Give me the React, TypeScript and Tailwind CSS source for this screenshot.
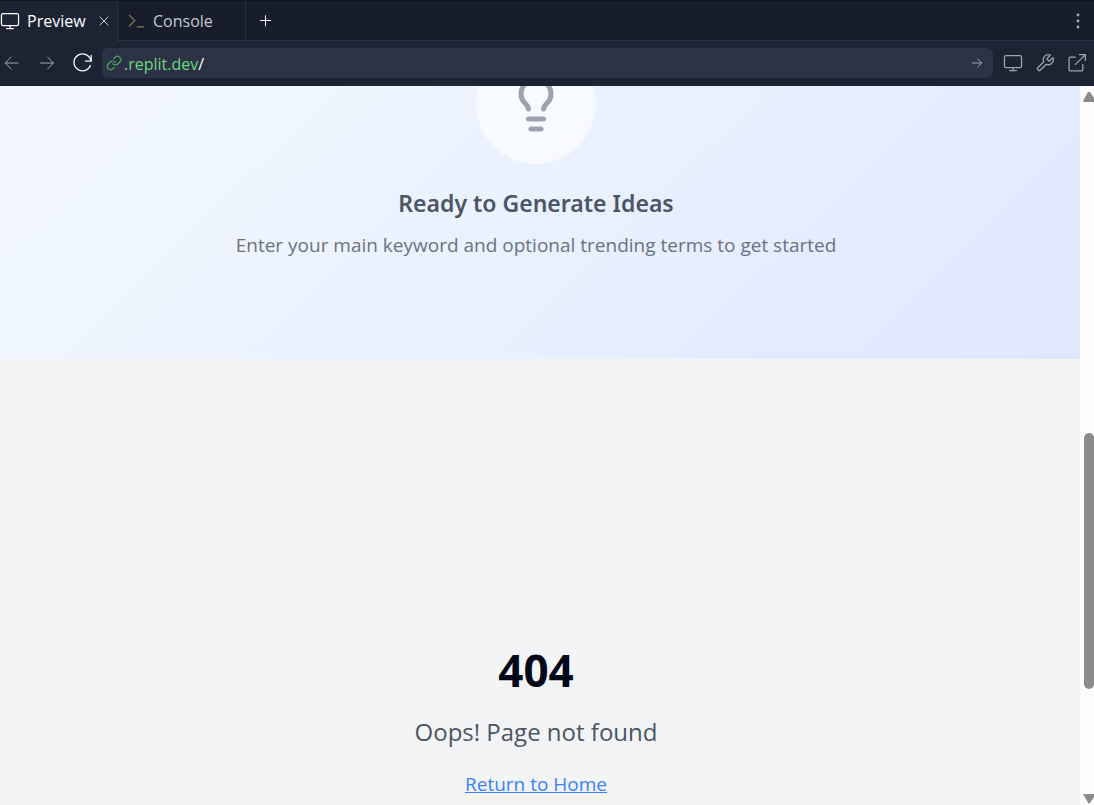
import React from "react";

type IconProps = { className?: string; children: React.ReactNode; stroke?: number };

function Icon({ className = "", children, stroke = 1.5 }: IconProps) {
  return (
    <svg viewBox="0 0 24 24" fill="none" stroke="currentColor" strokeWidth={stroke} strokeLinecap="round" strokeLinejoin="round" className={`block shrink-0 ${className}`} aria-hidden="true">
      {children}
    </svg>
  );
}

function Monitor({ className }: { className?: string }) {
  return (
    <Icon className={className}>
      <rect x="1.75" y="3" width="20.5" height="14.5" rx="2" />
      <path d="M12 17.5V21M8 21h8" />
    </Icon>
  );
}

function TabBar() {
  return (
    <div className="flex h-[41px] shrink-0 border-t border-[#0e1525] bg-[#171d2d]">
      <div className="flex w-[117px] items-center bg-[#1c2333] text-white">
        <button className="flex items-center gap-[7px]">
          <Monitor className="size-5" />
          Preview
        </button>
        <button aria-label="Close tab" className="ml-2.5 text-[#c2c8cc]">
          <Icon className="size-4"><path d="M6 6l12 12M18 6L6 18" /></Icon>
        </button>
      </div>
      <button className="flex w-[129px] items-center gap-[7px] border-x border-b border-[#2b3245] pl-2 text-[#c2c8cc]">
        <Icon className="size-5 text-[#8a7d4a]"><path d="M4 5l6.500 6.500L4 18M13.500 19h7.500" /></Icon>
        Console
      </button>
      <div className="flex flex-1 items-center justify-between border-b border-[#2b3245] pr-2 pl-3">
        <button aria-label="New tab" className="text-[#f5f9fc]">
          <Icon className="size-4"><path d="M11.250 4v15.500M3.500 11.250H19" /></Icon>
        </button>
        <button aria-label="More options" className="text-[#a9afb5]">
          <svg viewBox="0 0 16 16" fill="currentColor" className="block size-4" aria-hidden="true">
            <circle cx="8" cy="2" r="1.4" />
            <circle cx="8" cy="8" r="1.4" />
            <circle cx="8" cy="14" r="1.4" />
          </svg>
        </button>
      </div>
    </div>
  );
}

function AddressBar() {
  return (
    <div className="flex h-[45px] shrink-0 items-center bg-[#1c2333] pr-[7px] pb-0.5 text-[#a0a6ad]">
      <button aria-label="Back" className="ml-1">
        <Icon className="size-4"><path d="M21 12H2M10.500 3L2 12l8.500 9" /></Icon>
      </button>
      <button aria-label="Forward" className="ml-5">
        <Icon className="size-4"><path d="M1 12h19M11.500 3L20 12l-8.500 9" /></Icon>
      </button>
      <button aria-label="Reload" className="ml-4 text-[#f5f9fc]">
        <Icon className="size-[21px]"><path d="M22 4v6.500h-6.500M21.500 10A9.700 9.700 0 1 0 21 15.500" /></Icon>
      </button>
      <div className="ml-[9px] flex h-[30px] flex-1 items-center rounded-md bg-[#2b3245] px-1">
        <Icon className="size-4 text-[#4cab62]" stroke={1.800}>
          <path d="M10 13a5 5 0 0 0 7.540.540l3-3a5 5 0 0 0-7.070-7.070l-1.720 1.710" />
          <path d="M14 11a5 5 0 0 0-7.540-.540l-3 3a5 5 0 0 0 7.070 7.070l1.710-1.710" />
        </Icon>
        <span className="flex-1 pt-0.5 pl-0.5 text-[#6cd97e]">.replit.dev<span className="text-white">/</span></span>
        <button aria-label="Go" className="mr-1">
          <Icon className="size-4"><path d="M5 12h14M13 6l6 6-6 6" /></Icon>
        </button>
      </div>
      <div className="ml-2.5 flex gap-3">
        <button aria-label="Devices"><Monitor className="size-5" /></button>
        <button aria-label="Developer tools">
          <Icon className="size-5"><path d="M14.700 6.300a1 1 0 0 0 0 1.400l1.600 1.600a1 1 0 0 0 1.400 0l3.770-3.770a6 6 0 0 1-7.940 7.940l-6.910 6.910a2.120 2.120 0 0 1-3-3l6.910-6.910a6 6 0 0 1 7.940-7.940l-3.760 3.760z" /></Icon>
        </button>
        <button aria-label="Open in new tab">
          <Icon className="size-5"><path d="M10 5H4a1.500 1.500 0 0 0-1.500 1.500V20A1.500 1.500 0 0 0 4 21.500h13.500A1.500 1.500 0 0 0 19 20v-6M15 2h7v7M22 2L10 14" /></Icon>
        </button>
      </div>
    </div>
  );
}

function Scrollbar() {
  return (
    <div className="flex w-3.5 shrink-0 flex-col items-end bg-[#fcfcfc] pt-1.5 pb-px" aria-hidden="true">
      <svg viewBox="0 0 11 10" className="block h-2.5 w-[11px] fill-[#8b8b8b]"><path d="M5 0H7L11 6V10H1Q0 10 .500 8Z" /></svg>
      <div className="flex-[331]" />
      <div className="w-2.5 flex-[256] rounded-full bg-[#8b8b8b]" />
      <div className="flex-[105]" />
      <svg viewBox="0 0 11 10" className="block h-2.5 w-[11px] fill-[#8b8b8b]"><path d="M0 0H11V3L6.500 9.500H5.500Z" /></svg>
    </div>
  );
}

export default function App() {
  return (
    <div className="flex h-screen flex-col overflow-hidden font-['Open_Sans','Noto_Sans',sans-serif]">
      <header className="text-base">
        <TabBar />
        <AddressBar />
      </header>
      <div className="flex min-h-0 flex-1">
        <main className="flex min-w-0 flex-1 flex-col overflow-hidden bg-gray-100 text-center">
          <section className="flex h-[273px] shrink-0 flex-col items-center overflow-hidden bg-linear-to-br from-[#faf5ff] via-[#eff6ff] to-[#e0e7ff] bg-[length:100%_1050px] bg-bottom pr-2">
            <div className="-mt-[42px] flex size-[120px] shrink-0 items-center justify-center rounded-full bg-white/60 text-[#9ca3af]">
              <Icon className="size-[60px]" stroke={2}>
                <path d="M15 14c.2-1 .7-1.700 1.500-2.500 1-.9 1.500-2.200 1.500-3.500A6 6 0 0 0 6 8c0 1 .2 2.200 1.500 3.500.7.7 1.300 1.500 1.500 2.500M9 18h6M10 22h4" />
              </Icon>
            </div>
            <h2 className="mt-[19px] font-['Noto_Sans',sans-serif] text-[23px] leading-10 font-semibold text-[#4b5563]">Ready to Generate Ideas</h2>
            <p className="mt-1.5 text-[19px] leading-8 text-[#6b7280]">Enter your main keyword and optional trending terms to get started</p>
          </section>
          <section className="flex flex-col items-center pt-[281px] pr-2">
            <h1 className="text-[44px] leading-[60px] font-bold text-[#020817]">404</h1>
            <p className="mt-3 text-2xl leading-10 text-[#4b5563]">Oops! Page not found</p>
            <a href="#" className="mt-4 text-[19px] leading-8 text-[#3b82f6] underline">Return to Home</a>
          </section>
        </main>
        <Scrollbar />
      </div>
    </div>
  );
}
